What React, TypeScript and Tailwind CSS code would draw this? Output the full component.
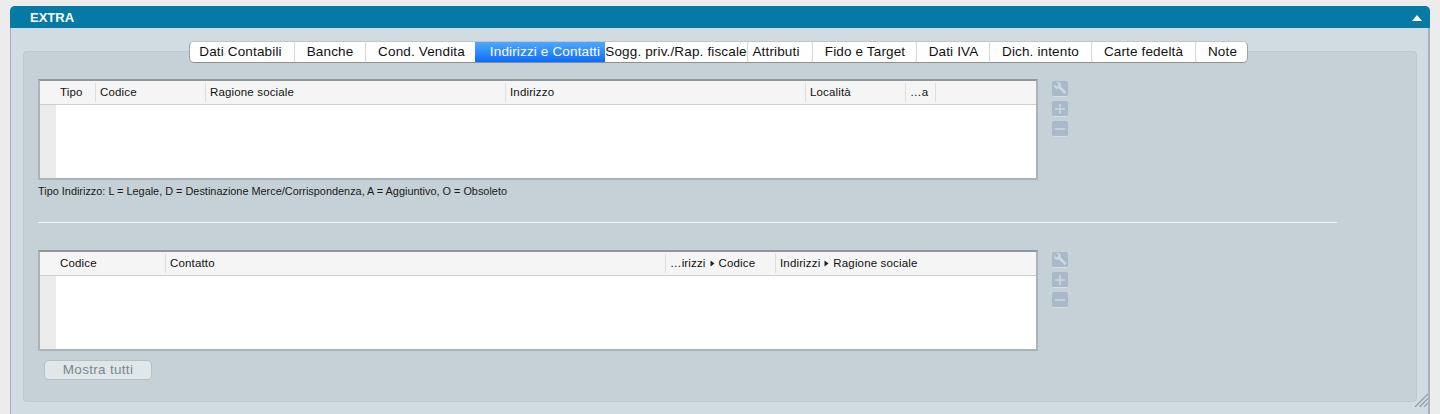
import React from "react";

const Caret = () => (
  <svg width="5" height="7" viewBox="0 0 5 7" className="inline-block mx-[4px]">
    <path d="M0.5 0.5 L4.5 3.5 L0.5 6.5 Z" fill="#222" />
  </svg>
);

type Col = { w: string; label: React.ReactNode; sep?: boolean };

const tabs: { label: string; w: string; active?: boolean }[] = [
  { label: "Dati Contabili", w: "w-[105px] pr-[3px]" },
  { label: "Banche", w: "w-[71px]" },
  { label: "Cond. Vendita", w: "w-[109px] pl-[2px]" },
  { label: "Indirizzi e Contatti", w: "w-[130px] pl-[10px]", active: true },
  { label: "Sogg. priv./Rap. fiscale", w: "w-[143px] tracking-[0.05px]" },
  { label: "Attributi", w: "w-[65px] pr-[8px]" },
  { label: "Fido e Target", w: "w-[104px] pl-[1px]" },
  { label: "Dati IVA", w: "w-[73px] pl-[1px]" },
  { label: "Dich. intento", w: "w-[102px]" },
  { label: "Carte fedeltà", w: "w-[104px]" },
  { label: "Note", w: "flex-1 pl-[2px]" },
];

function Grid({ cols }: { cols: Col[] }) {
  return (
    <div className="w-[1000px] h-[101px] border-t-2 border-t-[#8d989e] border-x-2 border-x-[#a9b3b8] border-b-2 border-b-[#a9b3b8] bg-white flex flex-col">
      <div className="h-[23px] shrink-0 bg-[#f5f5f5] border-b border-b-[#cfcfcf] flex items-center pl-[16px] box-content">
        {cols.map((c, i) => (
          <div key={i} className={`${c.w} h-[19px] flex items-center pl-[4px] border-r ${c.sep === false ? "border-r-transparent" : "border-r-[#dedede]"} text-[11.5px] tracking-[0.15px] leading-none text-[#111] whitespace-nowrap overflow-hidden`}>
            {c.label}
          </div>
        ))}
      </div>
      <div className="flex-1 flex">
        <div className="w-[16px] bg-[#ececec]" />
        <div className="flex-1 bg-white" />
      </div>
    </div>
  );
}

function IconBtn({ children }: { children: React.ReactNode }) {
  return (
    <div className="w-[16px] h-[16px] rounded-[2px] bg-[#a9b9c8] border-b border-b-[#d5dfe5] flex items-center justify-center">
      {children}
    </div>
  );
}

function Tools() {
  return (
    <div className="ml-[14px] mt-[2px] flex flex-col gap-[4px]">
      <IconBtn>
        <svg width="16" height="15" viewBox="0 0 16 15">
          <path d="M2 3.2 L4.4 5.4 L6.2 4.6 L6.4 2.6 L4 1 C6 0.2 8 1 8.6 2.6 C8.9 3.5 8.8 4.4 8.6 5 L14 10.6 C14.6 11.6 13.4 13.2 12.2 12.6 L6.8 7.4 C5.4 8 3.6 7.6 2.6 6.4 C2 5.6 1.8 4.4 2 3.2 Z" fill="#cdd8df" />
        </svg>
      </IconBtn>
      <IconBtn>
        <svg width="12" height="12" viewBox="0 0 12 12">
          <path d="M5.2 1h1.6v4.2H11v1.6H6.8V11H5.2V6.8H1V5.2h4.2z" fill="#cdd8df" />
        </svg>
      </IconBtn>
      <IconBtn>
        <svg width="12" height="12" viewBox="0 0 12 12">
          <path d="M1 5.2h10v1.6H1z" fill="#cdd8df" />
        </svg>
      </IconBtn>
    </div>
  );
}

export default function App() {
  const first: Col[] = [
    { w: "w-[40px]", label: "Tipo" },
    { w: "w-[110px]", label: "Codice" },
    { w: "w-[300px]", label: "Ragione sociale" },
    { w: "w-[300px]", label: "Indirizzo" },
    { w: "w-[100px]", label: "Località" },
    { w: "w-[30px]", label: "…a" },
  ];
  const second: Col[] = [
    { w: "w-[110px]", label: "Codice" },
    { w: "w-[500px]", label: "Contatto" },
    { w: "w-[110px]", label: <>…irizzi<Caret />Codice</> },
    { w: "w-[200px]", label: <>Indirizzi<Caret />Ragione sociale</>, sep: false },
  ];
  return (
    <div className="h-[414px] overflow-hidden bg-[#ececec] pt-[6px] px-[10px] font-['Liberation_Sans',Arial,sans-serif]">
      <div className="relative h-[420px] rounded-t-[5px] bg-[#d0dce2] border-l border-r-2 border-l-[#a6b2b8] border-r-[#a6b2b8]">
        <div className="-ml-px -mr-[2px] h-[22px] rounded-t-[5px] bg-[#0679a4] flex items-center justify-between pl-[20px] pr-[8px]">
          <span className="text-[13px] font-bold text-white leading-none">EXTRA</span>
          <svg width="10" height="6" viewBox="0 0 10 6" className="mt-[1px]">
            <path d="M5 0 L10 6 H0 Z" fill="#fff" />
          </svg>
        </div>
        <div className="pl-[12px] pr-[11px] pt-[23px]">
          <div className="h-[351px] rounded-[4px] bg-[#c5d1d7] border border-[#bcc9cf] pl-[14px]">
            <div className="flex w-[1059px] h-[22px] -mt-[11px] ml-[151px] bg-white rounded-[5px] border border-[#a0a0a0] border-t-[#c4c4c4] border-b-[#8e8e8e] overflow-hidden">
              {tabs.map((t, i) => (
                <div
                  key={i}
                  className={`${t.w} h-full flex items-center justify-center whitespace-nowrap text-[13.5px] tracking-[0.15px] leading-none ${
                    t.active
                      ? "bg-gradient-to-b from-[#4fa8fd] to-[#0a6bf9] text-white"
                      : i < tabs.length - 1 && !tabs[i + 1].active
                      ? "border-r border-r-[#d8d8d8] text-[#111]"
                      : "text-[#111]"
                  }`}
                >
                  {t.label}
                </div>
              ))}
            </div>
            <div className="flex mt-[16px]">
              <Grid cols={first} />
              <Tools />
            </div>
            <p className="mt-[5px] text-[10.9px] leading-[12px] text-[#1a1a1a]">
              Tipo Indirizzo: L = Legale, D = Destinazione Merce/Corrispondenza, A = Aggiuntivo, O = Obsoleto
            </p>
            <div className="mt-[25px] w-[1299px] h-px bg-[#f1f5f6]" />
            <div className="flex mt-[27px]">
              <Grid cols={second} />
              <Tools />
            </div>
            <button className="mt-[9px] ml-[6px] block w-[108px] h-[20px] rounded-[4px] bg-[#dfe7eb] border border-[#b4c0c6] text-[13.5px] tracking-[0.3px] leading-none text-[#7b868c]">
              Mostra tutti
            </button>
          </div>
        </div>
        <svg width="14" height="14" viewBox="0 0 14 14" className="absolute right-0 top-[387px]">
          <path d="M14 1 L1 14 M14 5.5 L5.5 14 M14 10 L10 14" stroke="#8f9ba1" strokeWidth="1.2" />
        </svg>
      </div>
    </div>
  );
}
